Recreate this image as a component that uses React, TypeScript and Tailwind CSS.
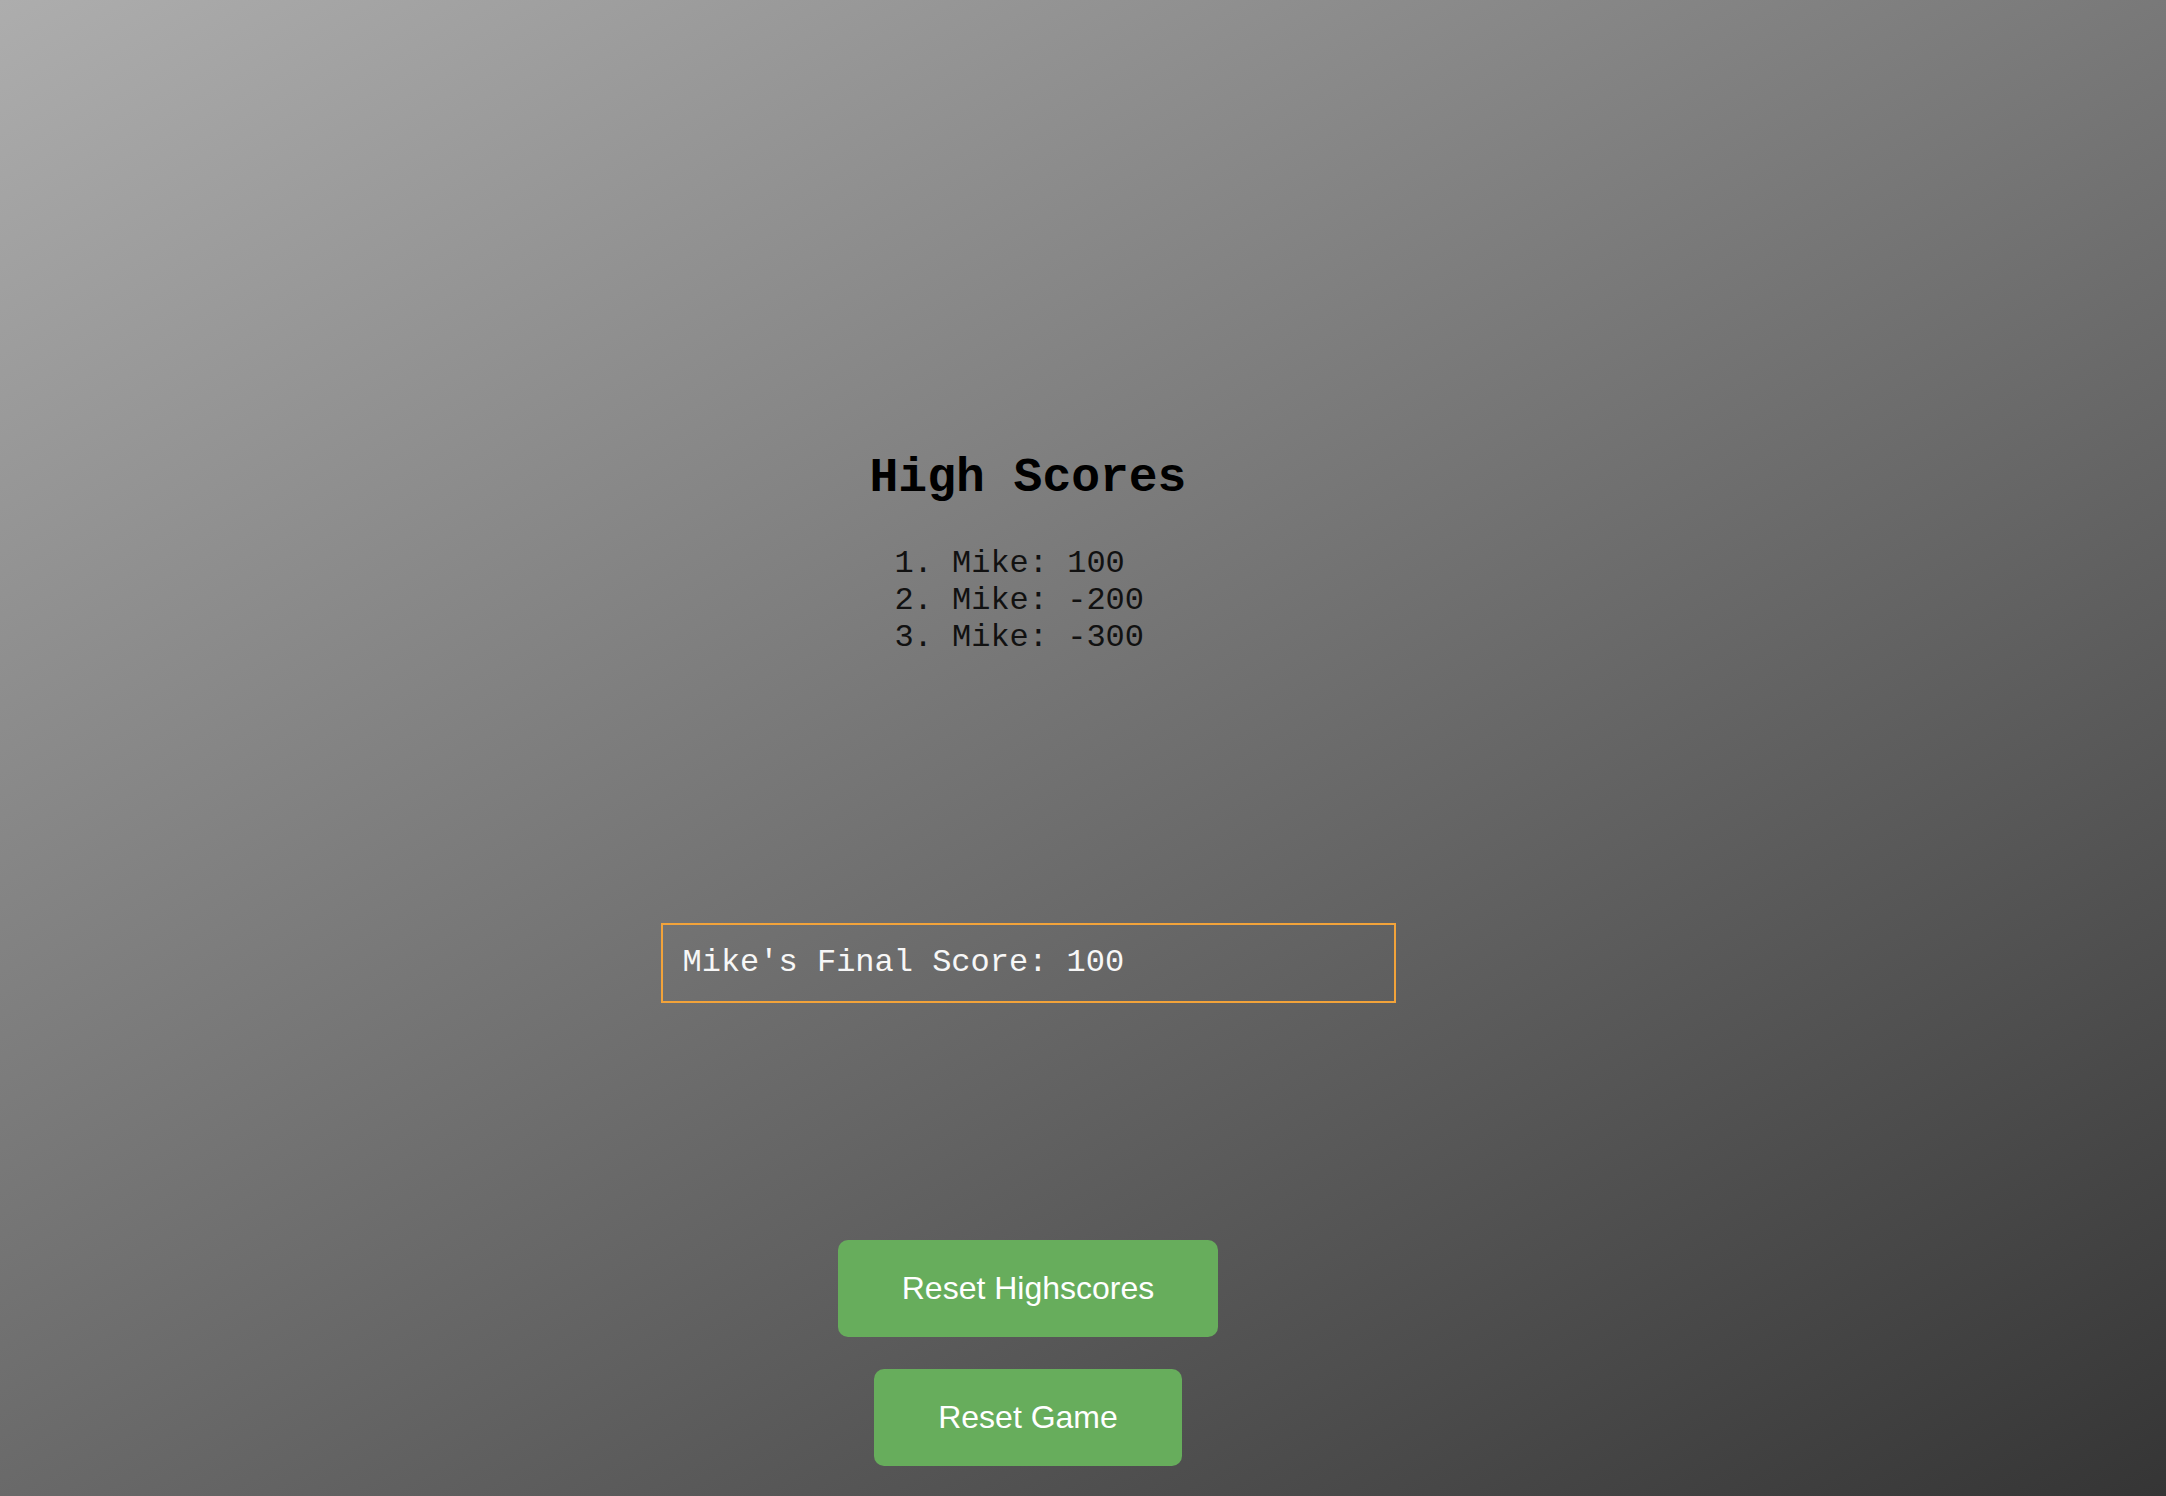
const SCORES = [
  { name: "Mike", score: 100 },
  { name: "Mike", score: -200 },
  { name: "Mike", score: -300 },
];

export default function App() {
  return (
    <div className="min-h-screen w-full bg-[linear-gradient(152deg,#adadad,#353535)] font-['Liberation_Mono','Courier_New',monospace]">
      <div className="flex flex-col items-center pt-[451px] pr-[110px] pb-[30px]">
        <h2 className="text-[48px] font-bold leading-[54px] text-black">High Scores</h2>

        <ol className="mt-[40px] list-decimal list-outside pl-[40px] text-left text-[32px] leading-[37px] text-[#111]">
          {SCORES.map((s, i) => (
            <li key={i}>
              {s.name}: {s.score}
            </li>
          ))}
        </ol>

        <div className="mt-[267px] w-[735px] border-2 border-[#f2a33a] p-5 text-[32px] leading-[36px] text-[#f7f7f7]">
          Mike's Final Score: 100
        </div>

        <button className="mt-[237px] rounded-[10px] bg-[#67ad5c] px-[64px] py-[30px] font-['Liberation_Sans',Arial,sans-serif] text-[32px] leading-[37px] text-white">
          Reset Highscores
        </button>
        <button className="mt-[32px] rounded-[10px] bg-[#67ad5c] px-[64px] py-[30px] font-['Liberation_Sans',Arial,sans-serif] text-[32px] leading-[37px] text-white">
          Reset Game
        </button>
      </div>
    </div>
  );
}
